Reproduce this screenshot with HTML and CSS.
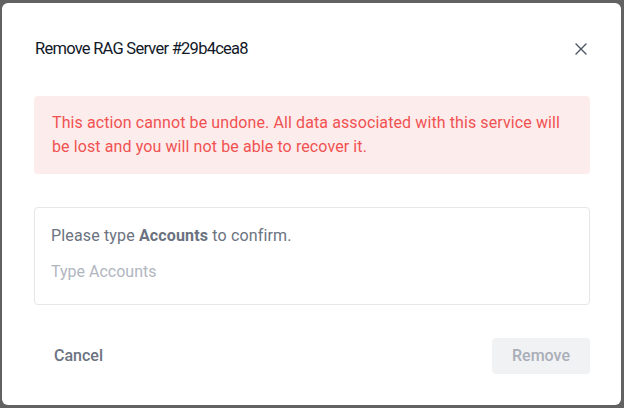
FILE: index.html
```html
<!DOCTYPE html>
<html>
<head>
<meta charset="utf-8">
<link rel="stylesheet" href="styles.css">
</head>
<body>
<div class="dialog">
  <div class="header">
    <h2 class="title">Remove RAG Server #29b4cea8</h2>
    <button class="close" aria-label="Close">
      <svg width="12" height="12" viewBox="0 0 12 12"><path d="M1 1L11 11M11 1L1 11" stroke="#4b5563" stroke-width="1.4" stroke-linecap="round"/></svg>
    </button>
  </div>
  <div class="alert">This action cannot be undone. All data associated with this service will be lost and you will not be able to recover it.</div>
  <div class="confirm">
    <div class="label">Please type <strong>Accounts</strong> to confirm.</div>
    <input class="input" type="text" placeholder="Type Accounts">
  </div>
  <div class="footer">
    <button class="cancel">Cancel</button>
    <button class="remove" disabled>Remove</button>
  </div>
</div>
</body>
</html>
```
FILE: styles.css
```css
html, body {
  margin: 0;
  height: 100%;
}
body {
  background: #626262;
  font-family: Roboto, "Noto Sans", sans-serif;
  padding: 3px 3px 3px 2px;
  box-sizing: border-box;
}
.dialog {
  background: #fff;
  border-radius: 6px;
  height: 402px;
  width: 619px;
  box-sizing: border-box;
  padding: 34px 31px 31px 32px;
  display: flex;
  flex-direction: column;
}
.header {
  display: flex;
  align-items: center;
  justify-content: space-between;
  height: 24px;
}
.title {
  margin: 0 0 0 1px;
  font-size: 16.5px;
  font-weight: 400;
  line-height: 24px;
  color: #111827;
  letter-spacing: -0.75px;
}
.close {
  border: 0;
  background: none;
  padding: 0;
  width: 12px;
  height: 12px;
  margin-right: 3px;
  display: flex;
}
.alert {
  margin-top: 35px;
  background: #fdecec;
  color: #f05252;
  border-radius: 4px;
  padding: 15px 18px;
  font-size: 16px;
  line-height: 24px;
  letter-spacing: 0.1px;
}
.confirm {
  margin-top: 33px;
  border: 1px solid #e5e7eb;
  border-radius: 4px;
  padding: 16px 16px 20px;
  display: flex;
  flex-direction: column;
  gap: 12px;
}
.label {
  font-size: 16px;
  line-height: 24px;
  color: #6b7280;
  letter-spacing: 0.15px;
}
.label strong {
  font-weight: 700;
  color: #6b7280;
}
.input {
  border: 0;
  outline: none;
  padding: 0;
  font-family: inherit;
  font-size: 16px;
  line-height: 24px;
  height: 24px;
  color: #111827;
  background: transparent;
}
.input::placeholder {
  color: #b1b6bf;
}
.footer {
  margin-top: 33px;
  display: flex;
  justify-content: space-between;
  align-items: center;
}
.cancel, .remove {
  font-family: inherit;
  font-size: 16px;
  font-weight: 500;
  line-height: 24px;
  border: 0;
  border-radius: 4px;
  height: 36px;
  padding: 0 20px;
}
.cancel {
  background: none;
  color: #6b7280;
}
.remove {
  background: #f1f2f4;
  color: #a9aeb8;
  width: 98px;
}
```
